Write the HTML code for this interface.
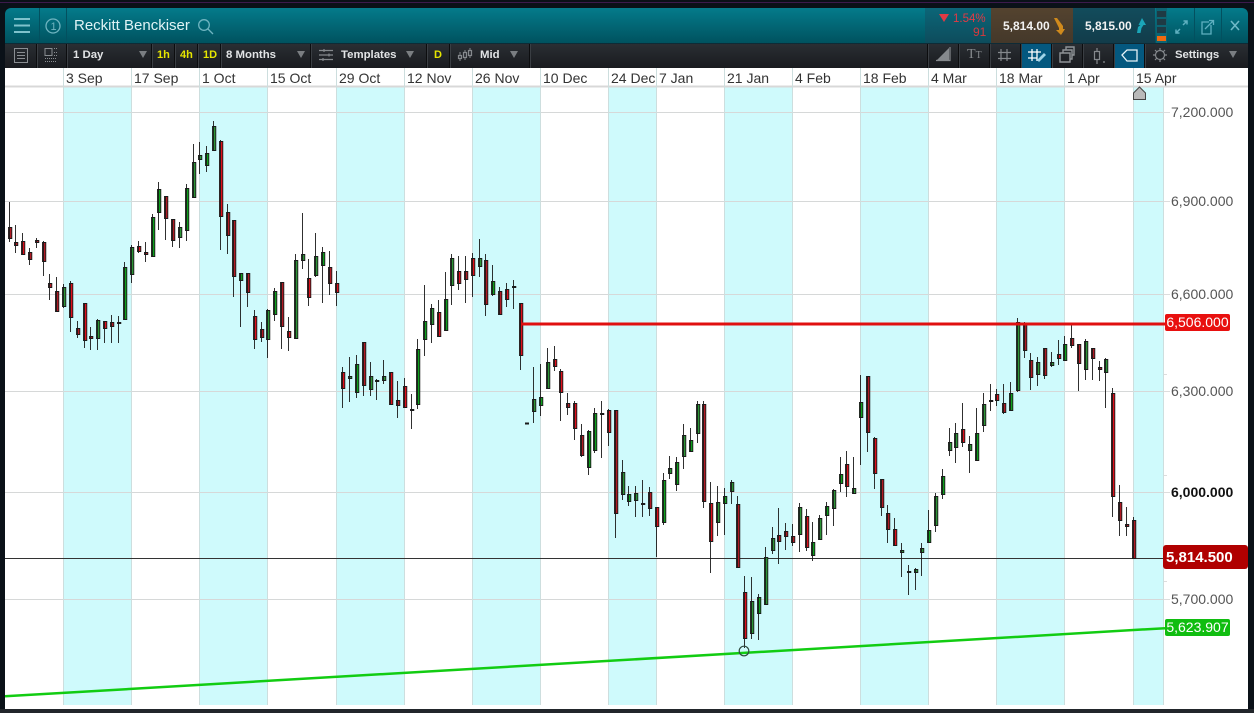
<!DOCTYPE html>
<html>
<head>
<meta charset="utf-8">
<title>Reckitt Benckiser</title>
<style>
html,body{margin:0;padding:0;width:1254px;height:713px;overflow:hidden;background:#0a1118}
body{position:relative;font-family:"Liberation Sans",Arial,sans-serif}
div{position:absolute}
#p{left:0;top:2px;width:1254px;height:1px;background:#3c1a4c}
#h{left:5px;top:8px;width:1243px;height:35px;background:linear-gradient(#047b8b,#00525f);border-radius:6px 6px 0 0}
#t{left:5px;top:44px;width:1243px;height:24px;background:linear-gradient(#2a2e33,#191b1f)}
#hl{left:5px;top:43px;width:1243px;height:1px;background:#0e2b36}
#c{left:5px;top:68px;width:1243px;height:641px;background:#fff}
#f{left:0;top:709px;width:1254px;height:4px;background:#22262b}
.s{width:1px;height:24px;top:44px;background:#0c0d0f;box-shadow:1px 0 0 #3a3e43}
.b{color:#e2e4e6;font-size:11.4px;font-weight:bold;top:47px;line-height:16px;white-space:nowrap}
.y{color:#e6e600;font-size:11px;font-weight:bold;top:47px;line-height:16px}
.d{font-size:14px;color:#333;top:69px;line-height:18px;white-space:nowrap}
.v{font-size:14px;color:#555;left:1171px;line-height:16px;white-space:nowrap}
.l{color:#fff;font-size:14px;line-height:17px;text-align:center;border-radius:2px;white-space:nowrap}
svg{position:absolute;left:0;top:0}
.r{fill:#e0101c}.k{fill:#b01a24}.g{fill:#0da01c}.e{fill:#2c9436}
#cd path{stroke:#1a1a1a;stroke-width:.9}
</style>
</head>
<body>
<div id="p"></div>
<div id="h"></div>
<div id="hl"></div>
<div id="t"></div>
<div id="c"></div>
<div id="f"></div>

<!-- header blocks -->
<div style="left:925px;top:8px;width:66px;height:35px;background:linear-gradient(#0c6678,#0d4c5c)"></div>
<div style="left:991px;top:8px;width:82px;height:35px;background:linear-gradient(#54432f,#44382a)"></div>
<div style="left:1073px;top:8px;width:82px;height:35px;background:linear-gradient(#124c5c,#123c4a)"></div>
<div style="left:39px;top:8px;width:1px;height:35px;background:#03505f"></div>
<div style="left:66px;top:8px;width:1px;height:35px;background:#03505f"></div>
<div style="left:1194px;top:8px;width:1px;height:35px;background:#03505f"></div>
<div style="left:1221px;top:8px;width:1px;height:35px;background:#03505f"></div>

<div style="left:74px;top:16px;color:#dff3f5;font-size:15px;line-height:20px;white-space:nowrap">Reckitt Benckiser</div>
<div style="left:953px;top:12px;color:#e23a44;font-size:11.5px;line-height:14px;white-space:nowrap">1.54%</div>
<div style="left:973px;top:25px;color:#d8393c;font-size:12px;line-height:14px;white-space:nowrap">91</div>
<div style="left:1003px;top:18px;color:#f2f2f2;font-size:12px;font-weight:bold;line-height:16px">5,814.00</div>
<div style="left:1085px;top:18px;color:#f2f2f2;font-size:12px;font-weight:bold;line-height:16px">5,815.00</div>

<!-- meter -->
<div style="left:1156px;top:8px;width:11px;height:35px;background:#0d6473"></div>
<div style="left:1157px;top:11px;width:9px;height:6px;background:#1f3a44"></div>
<div style="left:1157px;top:19px;width:9px;height:6px;background:#1f3a44"></div>
<div style="left:1157px;top:27px;width:9px;height:6px;background:#1f3a44"></div>
<div style="left:1157px;top:36px;width:9px;height:5px;background:#f06a10"></div>

<!-- active toolbar -->
<div style="left:1021px;top:44px;width:30px;height:24px;background:#04587f"></div>
<div style="left:1113px;top:44px;width:32px;height:24px;background:#04587f"></div>

<!-- toolbar separators -->
<div class="s" style="left:36px"></div>
<div class="s" style="left:66px"></div>
<div class="s" style="left:151px"></div>
<div class="s" style="left:174px"></div>
<div class="s" style="left:197px"></div>
<div class="s" style="left:220px"></div>
<div class="s" style="left:310px"></div>
<div class="s" style="left:426px"></div>
<div class="s" style="left:449px"></div>
<div class="s" style="left:529px"></div>
<div class="s" style="left:927px"></div>
<div class="s" style="left:958px"></div>
<div class="s" style="left:989px"></div>
<div class="s" style="left:1020px"></div>
<div class="s" style="left:1051px"></div>
<div class="s" style="left:1082px"></div>
<div class="s" style="left:1113px"></div>
<div class="s" style="left:1144px"></div>

<div class="b" style="left:73px">1 Day</div>
<div class="y" style="left:157px">1h</div>
<div class="y" style="left:180px">4h</div>
<div class="y" style="left:203px">1D</div>
<div class="b" style="left:226px">8 Months</div>
<div class="b" style="left:341px">Templates</div>
<div class="y" style="left:434px">D</div>
<div class="b" style="left:480px">Mid</div>
<div class="b" style="left:1175px;letter-spacing:-.1px">Settings</div>
<div style="left:967px;top:46px;color:#85898d;font-size:14px;line-height:18px;font-family:'Liberation Serif',serif">T<span style="font-size:10px">T</span></div>

<!-- date axis -->
<div class="d" style="left:66px">3 Sep</div>
<div class="d" style="left:134px">17 Sep</div>
<div class="d" style="left:202px">1 Oct</div>
<div class="d" style="left:270px">15 Oct</div>
<div class="d" style="left:339px">29 Oct</div>
<div class="d" style="left:407px">12 Nov</div>
<div class="d" style="left:475px">26 Nov</div>
<div class="d" style="left:543px">10 Dec</div>
<div class="d" style="left:611px">24 Dec</div>
<div class="d" style="left:659px">7 Jan</div>
<div class="d" style="left:727px">21 Jan</div>
<div class="d" style="left:795px">4 Feb</div>
<div class="d" style="left:863px">18 Feb</div>
<div class="d" style="left:931px">4 Mar</div>
<div class="d" style="left:999px">18 Mar</div>
<div class="d" style="left:1067px">1 Apr</div>
<div class="d" style="left:1136px">15 Apr</div>

<svg width="1254" height="713" viewBox="0 0 1254 713">
<!-- toolbar/header icons -->
<path d="M14 19h16M14 25.500h16M14 32h16" fill="none" stroke="#7fc2cc" stroke-width="2"/>
<g fill="none" stroke="#6fb4c0" stroke-width="1.300">
<circle cx="53" cy="26" r="7"/>
<circle cx="204" cy="25" r="5.300"/>
<path d="M208 29l5 5"/>
</g>
<text x="50.500" y="30" font-family="Liberation Sans" font-size="11" fill="#6fb4c0">1</text>
<path d="M939 14h10l-5 8z" fill="#e23a44"/>
<path d="M1054 18h3l6 8v3h2l-4 6-5-5h3v-2z" fill="#d08a1c"/>
<path d="M1142 18l4 7h-2.500l-2 3-1 5h-3.500l1-6 2.500-2h-2z" fill="#1ba6b8"/>
<g fill="none" stroke="#5fb0c0" stroke-width="1.300">
<path d="M1176 33l4-4M1176 29.500v3.500h3.500M1187 21l-4 4M1183.500 21h3.500v3.500" stroke-width="1.500"/>
<path d="M1211 25v9h-9v-12h7"/>
<path d="M1205 29l8-8M1209 20.500h4.500v4.500"/>
<path d="M1231 21l8 9M1239 21l-8 9" stroke-width="1.600" stroke="#6fb9c7"/>
</g>
<g fill="none" stroke="#8a8e92" stroke-width="1">
<rect x="14.500" y="48.500" width="13" height="14"/>
<path d="M17 52.500h8M17 55.500h8M17 58.500h8"/>
<path d="M45 48.500h7v7h-7z"/>
<path d="M54 48.500h3M54 52.500h3M54 55.500h3M45 58.500h12M45 61.500h12" stroke-dasharray="1 1"/>
</g>
<g fill="#7a7e82">
<path d="M139 51h8l-4 7zM297 51h8l-4 7zM406 51h8l-4 7zM510 51h8l-4 7zM1229 51h8l-4 7z"/>
</g>
<g fill="none" stroke="#85898d" stroke-width="1.200">
<path d="M319 50.500h14M319 55h14M319 59.500h14"/>
<path d="M324 49v3M329 53.500v3M323 58v3"/>
<path d="M460 52v9M465 50v10M470 48v10" stroke-width="1"/>
<rect x="458.500" y="55.500" width="3" height="3" fill="#2a2e33"/>
<rect x="463.500" y="52.500" width="3" height="5" fill="#2a2e33"/>
<rect x="468.500" y="50.500" width="3" height="5" fill="#2a2e33"/>
<path d="M936 60.500h14V47"/>
<path d="M937 60l12-12v12z" fill="#85898d" stroke="none"/>
<path d="M1001 49v12M1007 49v12M998 52.500h13M998 58.500h13"/>
<path d="M1060 53h10v9h-10zM1063 53v-3h9v9h-2M1066 50v-3h8v8h-2" stroke-width="1.400" stroke="#8f9397"/>
<path d="M1097 48v3M1097 60v4M1103 62h2"/>
<rect x="1094.500" y="51.500" width="5" height="8"/>
<circle cx="1160" cy="55" r="4.500"/>
<path d="M1160 48v2.500M1160 59.500v2.500M1153 55h2.500M1164.500 55h2.500M1155 50l2 2M1165 50l-2 2M1155 60l2-2M1165 60l-2-2"/>
</g>
<path d="M1032 49v12M1037 49v12M1028 52h13M1028 58h9" fill="none" stroke="#fff" stroke-width="1.300"/>
<path d="M1037 60l7-7 2 2-7 7z" fill="#9fd3e8"/>
<path d="M1122 55l5-5h10v11h-10z" fill="none" stroke="#e6f3f8" stroke-width="1.300"/>

<!-- axis bands -->
<g fill="#cffafc">
<rect x="63" y="87" width="68" height="618"/>
<rect x="199" y="87" width="68" height="618"/>
<rect x="336" y="87" width="68" height="618"/>
<rect x="472" y="87" width="68" height="618"/>
<rect x="608" y="87" width="48" height="618"/>
<rect x="724" y="87" width="68" height="618"/>
<rect x="860" y="87" width="68" height="618"/>
<rect x="996" y="87" width="68" height="618"/>
<rect x="1133" y="87" width="30" height="618"/>
</g>
<path d="M5 86.500H1248" stroke="#d8d8d8" stroke-width="2"/>
<path d="M5 112.500H1164M5 201.500H1164M5 294.500H1164M5 391.500H1164M5 492.500H1164M5 599.500H1164" stroke="#d6d8d8" stroke-width="1"/>
<path d="M63.500 68V705M131.500 68V705M199.500 68V705M267.500 68V705M336.500 68V705M404.500 68V705M472.500 68V705M540.500 68V705M608.500 68V705M656.500 68V705M724.500 68V705M792.500 68V705M860.500 68V705M928.500 68V705M996.500 68V705M1064.500 68V705M1133.500 68V705M1163.500 87V705" stroke="#cddede" stroke-width="1"/>
<path d="M1164 112.500h6M1164 201.500h6M1164 294.500h6M1164 391.500h6M1164 492.500h6M1164 599.500h6M1164 374.500h3M1164 475.500h3M1164 581.500h3" stroke="#ddd" stroke-width="1"/>

<path d="M5 558.500H1164" stroke="#333" stroke-width="1"/>

<g id="cd">
<path class="k" d="M9.500 202V242M8.500 227.500h3.300V238.500h-3.300z"/>
<path class="k" d="M15.500 225V253M14.500 242.500h3.300V245.500h-3.300z"/>
<path class="r" d="M22.500 233V255M21.500 241.500h3.300V254.500h-3.300z"/>
<path class="k" d="M29.500 248V265M28.500 252.500h3.300V259.500h-3.300z"/>
<path class="k" d="M36.500 238V248M35.500 240.500h3.300V242.500h-3.300z"/>
<path class="k" d="M43.500 241V276M42.500 242.500h3.300V261.500h-3.300z"/>
<path class="k" d="M49.500 274V300M48.500 283.500h3.300V287.500h-3.300z"/>
<path class="k" d="M56.500 277V312M55.500 291.500h3.300V311.500h-3.300z"/>
<path class="e" d="M63.500 284V308M62.500 287.500h3.300V306.500h-3.300z"/>
<path class="r" d="M70.500 281V332M69.500 283.500h3.300V317.500h-3.300z"/>
<path class="k" d="M77.500 321V338M76.500 328.500h3.300V334.500h-3.300z"/>
<path class="r" d="M84.500 303V348M83.500 303.500h3.300V340.500h-3.300z"/>
<path class="k" d="M90.500 327V350M89.500 336.500h3.300V338.500h-3.300z"/>
<path class="e" d="M97.500 319V350M96.500 320.500h3.300V338.500h-3.300z"/>
<path class="r" d="M104.500 321V343M103.500 321.500h3.300V328.500h-3.300z"/>
<path class="k" d="M111.500 315V343M110.500 322.500h3.300V326.500h-3.300z"/>
<path class="k" d="M118.500 316V343M117.500 322.500h3.300V323.500h-3.300z"/>
<path class="g" d="M124.500 262V320M123.500 267.500h3.300V319.500h-3.300z"/>
<path class="e" d="M131.500 245V283M130.500 247.500h3.300V274.500h-3.300z"/>
<path class="r" d="M138.500 241V253M137.500 246.500h3.300V251.500h-3.300z"/>
<path class="k" d="M145.500 242V262M144.500 252.500h3.300V254.500h-3.300z"/>
<path class="g" d="M152.500 214V257M151.500 217.500h3.300V256.500h-3.300z"/>
<path class="g" d="M158.500 182V230M157.500 189.500h3.300V212.500h-3.300z"/>
<path class="k" d="M165.500 196V240M164.500 196.500h3.300V218.500h-3.300z"/>
<path class="k" d="M172.500 219V247M171.500 219.500h3.300V240.500h-3.300z"/>
<path class="e" d="M179.500 222V248M178.500 227.500h3.300V237.500h-3.300z"/>
<path class="g" d="M186.500 184V241M185.500 188.500h3.300V230.500h-3.300z"/>
<path class="e" d="M193.500 144V198M192.500 162.500h3.300V197.500h-3.300z"/>
<path class="e" d="M199.500 142V174M198.500 155.500h3.300V159.500h-3.300z"/>
<path class="g" d="M206.500 146V172M205.500 153.500h3.300V165.500h-3.300z"/>
<path class="e" d="M213.500 121V150M212.500 126.500h3.300V150.500h-3.300z"/>
<path class="r" d="M220.500 140V250M219.500 141.500h3.300V216.500h-3.300z"/>
<path class="k" d="M227.500 204V254M226.500 212.500h3.300V235.500h-3.300z"/>
<path class="k" d="M233.500 220V297M232.500 220.500h3.300V276.500h-3.300z"/>
<path class="g" d="M240.500 273V327M239.500 273.500h3.300V280.500h-3.300z"/>
<path class="k" d="M247.500 273V307M246.500 273.500h3.300V292.500h-3.300z"/>
<path class="r" d="M254.500 310V349M253.500 316.500h3.300V339.500h-3.300z"/>
<path class="k" d="M261.500 322V342M260.500 329.500h3.300V337.500h-3.300z"/>
<path class="e" d="M267.500 309V358M266.500 310.500h3.300V339.500h-3.300z"/>
<path class="g" d="M274.500 288V321M273.500 291.500h3.300V314.500h-3.300z"/>
<path class="k" d="M281.500 282V349M280.500 282.500h3.300V326.500h-3.300z"/>
<path class="r" d="M288.500 317V351M287.500 331.500h3.300V337.500h-3.300z"/>
<path class="e" d="M295.500 254V339M294.500 260.500h3.300V338.500h-3.300z"/>
<path class="e" d="M302.500 213V269M301.500 254.500h3.300V260.500h-3.300z"/>
<path class="r" d="M308.500 259V306M307.500 278.500h3.300V297.500h-3.300z"/>
<path class="e" d="M315.500 233V277M314.500 256.500h3.300V275.500h-3.300z"/>
<path class="g" d="M322.500 247V303M321.500 252.500h3.300V265.500h-3.300z"/>
<path class="k" d="M329.500 251V295M328.500 267.500h3.300V283.500h-3.300z"/>
<path class="r" d="M336.500 271V306M335.500 283.500h3.300V292.500h-3.300z"/>
<path class="r" d="M342.500 367V408M341.500 372.500h3.300V388.500h-3.300z"/>
<path class="e" d="M349.500 357V402M348.500 376.500h3.300V378.500h-3.300z"/>
<path class="g" d="M356.500 355V398M355.500 364.500h3.300V392.500h-3.300z"/>
<path class="k" d="M363.500 342V396M362.500 342.500h3.300V385.500h-3.300z"/>
<path class="e" d="M370.500 362V396M369.500 376.500h3.300V389.500h-3.300z"/>
<path class="e" d="M376.500 379V400M375.500 380.500h3.300V381.500h-3.300z"/>
<path class="e" d="M383.500 360V384M382.500 376.500h3.300V380.500h-3.300z"/>
<path class="r" d="M390.500 372V405M389.500 372.500h3.300V404.500h-3.300z"/>
<path class="k" d="M397.500 381V418M396.500 400.500h3.300V405.500h-3.300z"/>
<path class="r" d="M404.500 378V408M403.500 386.500h3.300V407.500h-3.300z"/>
<path class="e" d="M411.500 394V429M410.500 409.500h3.300V410.500h-3.300z"/>
<path class="g" d="M417.500 339V409M416.500 349.500h3.300V404.500h-3.300z"/>
<path class="g" d="M424.500 285V356M423.500 321.500h3.300V339.500h-3.300z"/>
<path class="e" d="M431.500 304V343M430.500 308.500h3.300V324.500h-3.300z"/>
<path class="r" d="M438.500 300V337M437.500 312.500h3.300V336.500h-3.300z"/>
<path class="g" d="M445.500 272V331M444.500 299.500h3.300V330.500h-3.300z"/>
<path class="e" d="M451.500 254V305M450.500 258.500h3.300V285.500h-3.300z"/>
<path class="r" d="M458.500 256V290M457.500 271.500h3.300V283.500h-3.300z"/>
<path class="k" d="M465.500 256V303M464.500 271.500h3.300V279.500h-3.300z"/>
<path class="r" d="M472.500 253V297M471.500 258.500h3.300V275.500h-3.300z"/>
<path class="e" d="M479.500 239V277M478.500 258.500h3.300V266.500h-3.300z"/>
<path class="k" d="M485.500 254V316M484.500 260.500h3.300V304.500h-3.300z"/>
<path class="g" d="M492.500 265V296M491.500 281.500h3.300V294.500h-3.300z"/>
<path class="k" d="M499.500 287V315M498.500 291.500h3.300V314.500h-3.300z"/>
<path class="r" d="M506.500 283V307M505.500 289.500h3.300V299.500h-3.300z"/>
<path class="k" d="M513.500 280V309M512.500 286.500h3.300V287.500h-3.300z"/>
<path class="r" d="M520.500 303V370M519.500 303.500h3.300V355.500h-3.300z"/>
<path class="k" d="M525 423.500h4" style="stroke-width:2"/>
<path class="e" d="M533.500 367V423M532.500 399.500h3.300V411.500h-3.300z"/>
<path class="g" d="M540.500 364V416M539.500 397.500h3.300V405.500h-3.300z"/>
<path class="e" d="M547.500 348V388M546.500 362.500h3.300V388.500h-3.300z"/>
<path class="r" d="M554.500 346V371M553.500 359.500h3.300V366.500h-3.300z"/>
<path class="r" d="M560.500 369V421M559.500 371.500h3.300V392.500h-3.300z"/>
<path class="k" d="M567.500 393V415M566.500 403.500h3.300V407.500h-3.300z"/>
<path class="r" d="M574.500 401V440M573.500 403.500h3.300V428.500h-3.300z"/>
<path class="k" d="M581.500 424V457M580.500 435.500h3.300V455.500h-3.300z"/>
<path class="g" d="M588.500 430V475M587.500 431.500h3.300V467.500h-3.300z"/>
<path class="g" d="M594.500 408V453M593.500 413.500h3.300V450.500h-3.300z"/>
<path class="e" d="M601.500 401V458M600.500 413.500h3.300V414.500h-3.300z"/>
<path class="r" d="M608.500 409V446M607.500 410.500h3.300V432.500h-3.300z"/>
<path class="k" d="M615.500 410V538M614.500 410.500h3.300V513.500h-3.300z"/>
<path class="e" d="M622.500 460V500M621.500 472.500h3.300V494.500h-3.300z"/>
<path class="g" d="M628.500 486V506M627.500 494.500h3.300V501.500h-3.300z"/>
<path class="e" d="M635.500 486V517M634.500 493.500h3.300V500.500h-3.300z"/>
<path class="e" d="M642.500 480V517M641.500 503.500h3.300V504.500h-3.300z"/>
<path class="k" d="M649.500 487V516M648.500 492.500h3.300V508.500h-3.300z"/>
<path class="r" d="M656.500 507V557M655.500 507.500h3.300V526.500h-3.300z"/>
<path class="g" d="M663.500 473V525M662.500 480.500h3.300V522.500h-3.300z"/>
<path class="e" d="M669.500 456V479M668.500 468.500h3.300V473.500h-3.300z"/>
<path class="g" d="M676.500 457V491M675.500 462.500h3.300V484.500h-3.300z"/>
<path class="e" d="M683.500 424V469M682.500 435.500h3.300V456.500h-3.300z"/>
<path class="g" d="M690.500 428V452M689.500 440.500h3.300V451.500h-3.300z"/>
<path class="e" d="M697.500 401V443M696.500 404.500h3.300V433.500h-3.300z"/>
<path class="k" d="M703.500 401V508M702.500 404.500h3.300V501.500h-3.300z"/>
<path class="r" d="M710.500 482V573M709.500 503.500h3.300V541.500h-3.300z"/>
<path class="e" d="M717.500 486V536M716.500 502.500h3.300V522.500h-3.300z"/>
<path class="g" d="M724.500 488V535M723.500 496.500h3.300V503.500h-3.300z"/>
<path class="e" d="M731.500 480V504M730.500 482.500h3.300V491.500h-3.300z"/>
<path class="k" d="M737.500 496V568M736.500 504.500h3.300V567.500h-3.300z"/>
<path class="r" d="M744.500 576V648M743.500 592.500h3.300V638.500h-3.300z"/>
<path class="e" d="M751.500 577V639M750.500 601.500h3.300V633.500h-3.300z"/>
<path class="g" d="M758.500 594V640M757.500 597.500h3.300V613.500h-3.300z"/>
<path class="e" d="M765.500 547V605M764.500 557.500h3.300V604.500h-3.300z"/>
<path class="e" d="M772.500 527V554M771.500 538.500h3.300V550.500h-3.300z"/>
<path class="k" d="M778.500 508V564M777.500 535.500h3.300V541.500h-3.300z"/>
<path class="k" d="M785.500 523V550M784.500 531.500h3.300V536.500h-3.300z"/>
<path class="k" d="M792.500 524V546M791.500 536.500h3.300V542.500h-3.300z"/>
<path class="e" d="M799.500 503V552M798.500 507.500h3.300V534.500h-3.300z"/>
<path class="r" d="M806.500 509V551M805.500 516.500h3.300V547.500h-3.300z"/>
<path class="g" d="M812.500 522V561M811.500 542.500h3.300V555.500h-3.300z"/>
<path class="e" d="M819.500 515V540M818.500 518.500h3.300V539.500h-3.300z"/>
<path class="g" d="M826.500 502V535M825.500 506.500h3.300V515.500h-3.300z"/>
<path class="e" d="M833.500 489V526M832.500 490.500h3.300V508.500h-3.300z"/>
<path class="g" d="M840.500 457V492M839.500 474.500h3.300V483.500h-3.300z"/>
<path class="r" d="M846.500 451V497M845.500 464.500h3.300V486.500h-3.300z"/>
<path class="e" d="M853.500 457V494M852.500 488.500h3.300V493.500h-3.300z"/>
<path class="g" d="M860.500 375V465M859.500 402.500h3.300V417.500h-3.300z"/>
<path class="k" d="M867.500 376V452M866.500 376.500h3.300V432.500h-3.300z"/>
<path class="r" d="M874.500 437V489M873.500 438.500h3.300V473.500h-3.300z"/>
<path class="k" d="M881.500 479V516M880.500 479.500h3.300V507.500h-3.300z"/>
<path class="k" d="M887.500 505V543M886.500 513.500h3.300V529.500h-3.300z"/>
<path class="r" d="M894.500 518V546M893.500 529.500h3.300V545.500h-3.300z"/>
<path class="e" d="M901.500 543V577M900.500 550.500h3.300V552.500h-3.300z"/>
<path class="e" d="M908.500 565V595M907.500 571.500h3.300V572.500h-3.300z"/>
<path class="e" d="M915.500 568V590M914.500 569.500h3.300V572.500h-3.300z"/>
<path class="e" d="M921.500 543V576M920.500 548.500h3.300V552.500h-3.300z"/>
<path class="g" d="M928.500 510V543M927.500 530.500h3.300V542.500h-3.300z"/>
<path class="e" d="M935.500 493V532M934.500 496.500h3.300V525.500h-3.300z"/>
<path class="g" d="M942.500 469V499M941.500 476.500h3.300V494.500h-3.300z"/>
<path class="e" d="M949.500 428V456M948.500 442.500h3.300V450.500h-3.300z"/>
<path class="e" d="M955.500 423V463M954.500 433.500h3.300V447.500h-3.300z"/>
<path class="r" d="M962.500 403V447M961.500 429.500h3.300V442.500h-3.300z"/>
<path class="e" d="M969.500 436V473M968.500 444.500h3.300V450.500h-3.300z"/>
<path class="g" d="M976.500 408V460M975.500 433.500h3.300V460.500h-3.300z"/>
<path class="e" d="M983.500 393V432M982.500 404.500h3.300V425.500h-3.300z"/>
<path class="e" d="M990.500 384V411M989.500 400.500h3.300V401.500h-3.300z"/>
<path class="r" d="M996.500 389V406M995.500 394.500h3.300V400.500h-3.300z"/>
<path class="k" d="M1003.500 384V414M1002.500 403.500h3.300V412.500h-3.300z"/>
<path class="g" d="M1010.500 382V411M1009.500 393.500h3.300V410.500h-3.300z"/>
<path class="e" d="M1017.500 318V392M1016.500 322.500h3.300V390.500h-3.300z"/>
<path class="k" d="M1024.500 322V358M1023.500 323.500h3.300V350.500h-3.300z"/>
<path class="k" d="M1030.500 353V390M1029.500 360.500h3.300V377.500h-3.300z"/>
<path class="e" d="M1037.500 357V386M1036.500 362.500h3.300V374.500h-3.300z"/>
<path class="k" d="M1044.500 348V379M1043.500 348.500h3.300V375.500h-3.300z"/>
<path class="e" d="M1051.500 352V367M1050.500 362.500h3.300V365.500h-3.300z"/>
<path class="r" d="M1058.500 340V365M1057.500 354.500h3.300V358.500h-3.300z"/>
<path class="g" d="M1064.500 336V361M1063.500 344.500h3.300V360.500h-3.300z"/>
<path class="k" d="M1071.500 325V348M1070.500 338.500h3.300V345.500h-3.300z"/>
<path class="k" d="M1078.500 344V391M1077.500 344.500h3.300V363.500h-3.300z"/>
<path class="e" d="M1085.500 339V380M1084.500 341.500h3.300V369.500h-3.300z"/>
<path class="k" d="M1092.500 348V380M1091.500 348.500h3.300V358.500h-3.300z"/>
<path class="k" d="M1099.500 361V381M1098.500 367.500h3.300V369.500h-3.300z"/>
<path class="e" d="M1105.500 358V408M1104.500 359.500h3.300V372.500h-3.300z"/>
<path class="r" d="M1112.500 388V517M1111.500 393.500h3.300V496.500h-3.300z"/>
<path class="k" d="M1119.500 485V536M1118.500 502.500h3.300V520.500h-3.300z"/>
<path class="k" d="M1126.500 507V536M1125.500 524.500h3.300V526.500h-3.300z"/>
<path class="k" d="M1133.500 517V559M1132.500 520.500h3.300V558.500h-3.300z"/>
</g>

<path d="M521 324H1165" stroke="#e01010" stroke-width="3"/>
<path d="M5 696.300L1165 628.200" stroke="#12cc12" stroke-width="2.500"/>
<circle cx="744" cy="651" r="4.800" fill="none" stroke="#2f4a3f" stroke-width="1.200"/>
<path d="M1133.500 99.500V93l6-6 6 6v6.500z" fill="#b9b9b9" stroke="#444" stroke-width="1"/>
</svg>

<!-- price axis -->
<div class="v" style="top:104px">7,200.000</div>
<div class="v" style="top:193px">6,900.000</div>
<div class="v" style="top:286px">6,600.000</div>
<div class="v" style="top:383px">6,300.000</div>
<div class="v" style="top:484px;color:#111;font-weight:bold">6,000.000</div>
<div class="v" style="top:591px">5,700.000</div>

<div class="l" style="left:1165px;top:314px;width:65px;height:17px;background:#e8100f">6,506.000</div>
<div class="l" style="left:1163px;top:545px;width:85px;height:24px;line-height:26px;background:#b00000;font-weight:bold;font-size:15px;text-align:left;text-indent:3px;border-radius:3px">5,814.500</div>
<div class="l" style="left:1165px;top:619px;width:65px;height:17px;background:#10bd10">5,623.907</div>
</body>
</html>
